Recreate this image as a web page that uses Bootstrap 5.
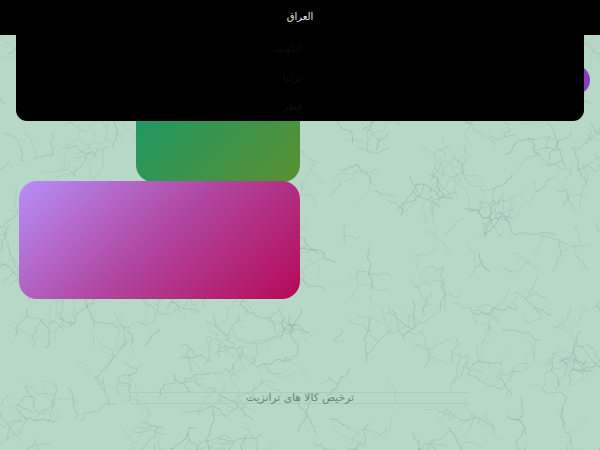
<!DOCTYPE html>
<html lang="fa">
<head>
<meta charset="utf-8">
<title>ترخیص کالا</title>
<link href="https://cdn.jsdelivr.net/npm/bootstrap@5.3.0/dist/css/bootstrap.min.css" rel="stylesheet">
<style>
html,body{height:100%;margin:0}
body{background:#b7d7c7;overflow:hidden;font-family:"DejaVu Sans","Liberation Sans",sans-serif}
.page-shell{width:600px;height:450px;overflow:hidden}
.crack-layer{inset:0;z-index:0}
.top-strip{height:35px;background:#000;color:#e4e4e4;font-size:10px;padding-bottom:3px;z-index:3}
.menu-panel{top:0;left:16px;width:568px;height:121px;background:#000;border-radius:0 0 11px 11px;padding-top:34px;z-index:2}
.menu-line{height:29px;font-size:10px;color:#0f0f0f;filter:blur(.6px);padding-right:282px}
.purple-dot{width:30px;height:30px;left:560px;top:65px;background:#8b3fc0;border-radius:50%;z-index:1}
.tile-stack{width:300px;padding:0 0 0 19px;z-index:1}
.tile-green{width:164px;height:122px;margin-top:25px;border-radius:0 0 17px 17px;background:linear-gradient(135deg,#0f9a70,#5a9030)}
.tile-purple{width:281px;height:118px;margin-top:-1px;border-radius:18px;background:linear-gradient(137deg,#b68cf4 2%,#b0459f 50%,#b50c58 98%)}
.caption-band{left:130px;top:392px;width:340px;height:12px;border-top:1px solid #abcbbb;border-bottom:1px solid #abcbbb;color:#6f8479;font-size:10.7px;line-height:10px;z-index:1}
</style>
</head>
<body>
<div class="page-shell position-relative">
  <svg class="crack-layer position-absolute" width="600" height="450" id="cracks" aria-hidden="true"></svg>
  <div class="top-strip position-relative d-flex justify-content-center align-items-center">العراق</div>
  <div class="menu-panel position-absolute">
    <div class="menu-line d-flex justify-content-end align-items-center">الكويت</div>
    <div class="menu-line d-flex justify-content-end align-items-center">تركيا</div>
    <div class="menu-line d-flex justify-content-end align-items-center">قطر</div>
  </div>
  <div class="purple-dot position-absolute"></div>
  <div class="tile-stack position-relative d-flex flex-column align-items-end">
    <div class="tile-green"></div>
    <div class="tile-purple"></div>
  </div>
  <div class="caption-band position-absolute text-center" dir="rtl">ترخیص کالا های ترانزیت</div>
</div>
<script>
(function(){
  var seed=4242;
  function r(){seed=(seed*16807)%2147483647;return seed/2147483647;}
  var svg=document.getElementById('cracks'),out='';
  function walk(x,y,a,n,w,d){
    var p='M'+x.toFixed(1)+' '+y.toFixed(1);
    for(var i=0;i<n;i++){
      var t=a+(r()-.5)*1.7;
      var s=1.5+r()*4;
      x+=Math.cos(t)*s;y+=Math.sin(t)*s;
      p+='L'+x.toFixed(1)+' '+y.toFixed(1);
      if(d<2&&r()<.16)walk(x,y,a+(r()<.5?-1:1)*(.7+r()),3+Math.floor(r()*9),w*.8,d+1);
    }
    out+='<path d="'+p+'" fill="none" stroke="#5b8676" stroke-opacity="'+(.18+r()*.3).toFixed(2)+'" stroke-width="'+w.toFixed(2)+'"/>';
  }
  for(var gy=0;gy<13;gy++)for(var gx=0;gx<17;gx++){
    walk(gx*36+r()*36,gy*36+r()*36,r()*6.28,6+Math.floor(r()*9),.6,0);
  }
  svg.innerHTML=out;
})();
</script>
<script src="https://cdn.jsdelivr.net/npm/bootstrap@5.3.0/dist/js/bootstrap.bundle.min.js"></script>
</body>
</html>
